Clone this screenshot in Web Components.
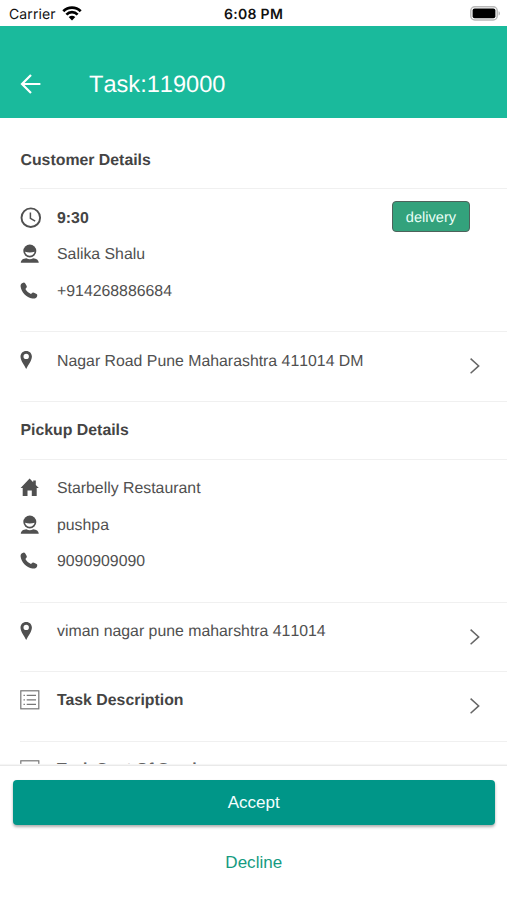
<!DOCTYPE html>
<html lang="en">
<head>
<meta charset="utf-8">
<title>Task</title>
<style>
html,body{margin:0;height:100%;background:#fff;overflow:hidden}
</style>
</head>
<body>
<task-screen></task-screen>
<script>
const ICONS = {
  wifi: '<svg width="20" height="15" viewBox="0 0 20 15" fill="none" stroke="#000" stroke-width="2.7"><path d="M1.3 5.2C6.2.3 13.8.3 18.7 5.2"/><path d="M4.4 8.6C7.5 5.4 12.5 5.4 15.6 8.6"/><path d="M6.7 11.1Q10 8.2 13.3 11.1L10 14.5Z" fill="#000" stroke="none"/></svg>',
  battery: '<svg width="31" height="15" viewBox="0 0 31 15"><rect x=".8" y=".8" width="26.4" height="13.2" rx="4" fill="#fff" stroke="#b9b9b9" stroke-width="1.5"/><rect x="2.6" y="2.6" width="22.8" height="9.6" rx="2" fill="#000"/><path d="M28.6 5.3C30.2 5.8 30.2 9 28.6 9.5Z" fill="#aaa"/></svg>',
  back: '<svg width="22" height="22" viewBox="0 0 22 22" fill="none" stroke="#fff" stroke-width="2.2"><path d="M20.4 11H2.6M11 1.9L2 11L11 20.1"/></svg>',
  clock: '<svg width="22" height="22" viewBox="0 0 22 22" fill="none" stroke="currentColor"><circle cx="10.8" cy="10.7" r="9.3" stroke-width="1.9"/><path d="M10.4 5.4V11.3L15.2 14.1" stroke-width="1.5"/></svg>',
  person: '<svg width="20" height="20" viewBox="0 0 20 20" fill="currentColor"><circle cx="9.8" cy="7" r="6.5"/><path d="M5 7.8Q9.8 9 14.6 7.8C14.2 10.2 12.3 11.7 9.8 11.7S5.4 10.2 5 7.8Z" fill="#fff"/><path d="M.8 18.8C.9 15.7 3.1 14.6 6.4 14.2Q9.8 16.2 13.2 14.2C16.5 14.6 18.6 15.7 18.8 18.8Z"/></svg>',
  phone: '<svg width="20" height="20" viewBox="0 0 20 20" fill="currentColor"><path d="M3.2 1.7Q4.4 1.3 5.1 2.3L6.7 4.9Q7.1 5.9 6.4 6.8L5.4 8C6.4 10.2 8.7 12 11 13L12.3 11.8Q13 11.3 14 11.7L16.6 13Q17.6 13.8 17.2 14.9C16.6 16.9 14.8 17.9 12.4 17.5C6.3 16.4 1.2 11 .6 5.4C.4 3.4 1.4 2 3.2 1.7Z"/></svg>',
  pin: '<svg width="14" height="20" viewBox="0 0 14 20" fill="currentColor"><path fill-rule="evenodd" d="M6.2 .9C2.8 .9 .5 3.3 .5 6.5C.5 10.7 4.2 14.7 6.2 19C8.2 14.7 11.9 10.7 11.9 6.5C11.9 3.3 9.6 .9 6.2 .9ZM6.2 3.7A2.7 2.7 0 1 1 6.2 9.1A2.7 2.7 0 1 1 6.2 3.7Z"/></svg>',
  home: '<svg width="20" height="20" viewBox="0 0 20 20" fill="currentColor"><path d="M9.6 .6L13.2 4.3V2.6H15.8V7L18.8 10.1H16.7V17.9H11.8V12.4H7.5V17.9H2.7V10.1H.6Z"/></svg>',
  list: '<svg width="20" height="20" viewBox="0 0 20 20" fill="none" stroke="#777" stroke-width="1.2"><rect x=".8" y=".8" width="18" height="18"/><path d="M6.7 5.4H16M6.7 9.9H16M6.7 14.4H16M3.5 5.4H4.9M3.5 9.9H4.9M3.5 14.4H4.9"/></svg>',
  chevron: '<svg width="12" height="18" viewBox="0 0 12 18" fill="none" stroke="#666" stroke-width="1.5"><path d="M1.6 1.6L9.7 8.9L1.6 16.2"/></svg>'
};
function define(name, render) {
  customElements.define(name, class extends HTMLElement {
    connectedCallback() {
      if (!this.shadowRoot) this.attachShadow({mode: 'open'}).innerHTML = render(this);
    }
  });
}
define('ui-icon', el => `<style>:host{display:block;line-height:0;flex:none}svg{display:block}</style>${ICONS[el.getAttribute('name')]}`);

define('status-bar', () => `<style>
:host{display:grid;grid-template-columns:1fr auto 1fr;align-items:center;height:25.5px;padding:2px 6px 0 9px;box-sizing:border-box;background:#fff;color:#111;font:14px/23px Inter,sans-serif;flex:none}
.l{display:flex;align-items:center;gap:6px;letter-spacing:.1px}.t{font-weight:600;letter-spacing:.3px;margin-right:3px;padding-top:1px}.l span{padding-top:1px}.r{justify-self:end}
ui-icon{margin-bottom:1px}
</style><div class="l"><span>Carrier</span><ui-icon name="wifi"></ui-icon></div><div class="t">6:08 PM</div><ui-icon class="r" name="battery"></ui-icon>`);

define('app-header', () => `<style>
:host{display:flex;align-items:center;gap:47px;height:92.5px;box-sizing:border-box;padding:25px 20px 0 20px;background:#1aba9c;color:#fff;font-size:23.6px;line-height:30px;flex:none}
span{padding-top:2px}
</style><ui-icon name="back"></ui-icon><span><slot></slot></span>`);

define('section-title', () => `<style>
:host{display:flex;align-items:center;box-sizing:border-box;height:58px;margin-left:20px;padding:2px 0 0 .5px;border-bottom:1px solid #f0f0f0;color:#444;font-weight:bold;flex:none}
</style><slot></slot>`);

define('info-group', () => `<style>
:host{display:block;box-sizing:border-box;height:143px;margin-left:20px;padding-top:10.5px;border-bottom:1px solid #f0f0f0;flex:none}
</style><slot></slot>`);

define('info-row', el => `<style>
:host{display:flex;align-items:center;height:36.6px;box-sizing:border-box}
.i{width:37px;flex:none}.text{flex:1;padding-top:2px}
</style><div class="i"><ui-icon name="${el.getAttribute('icon')}"></ui-icon></div><span class="text"><slot></slot></span><slot name="badge"></slot>`);

define('type-badge', () => `<style>
:host{display:flex;align-items:center;justify-content:center;width:78px;height:31px;box-sizing:border-box;margin:-2px 37px 0 0;border:1.5px solid #4e625b;border-radius:4px;background:#33a27c;color:#e9fff7;font-size:14.6px;font-weight:normal;padding-top:2px}
</style><slot></slot>`);

define('link-row', el => `<style>
:host{display:flex;align-items:flex-start;box-sizing:border-box;height:69.5px;margin-left:20px;padding:18px 26px 0 0;border-bottom:1px solid #f0f0f0;flex:none}
.i{width:37px;flex:none}.text{flex:1;line-height:20px;margin-top:var(--text-top,1.5px)}.c{margin-top:7px}
</style><div class="i"><ui-icon name="${el.getAttribute('icon')}"></ui-icon></div><span class="text"><slot></slot></span><ui-icon class="c" name="chevron"></ui-icon>`);

define('action-footer', () => `<style>
:host{display:flex;flex-direction:column;height:135px;box-sizing:border-box;padding:14px 12.5px 0 13px;border-top:1px solid #e9e9e9;box-shadow:0 -1px 1px #f5f5f5;background:#fff;flex:none;z-index:1;font-size:17.05px}
button{display:block;font:inherit;height:44.5px;border:0;padding:1px 0 0;margin:0;border-radius:4px;background:#009688;color:#f2ffff;box-shadow:0 2px 3px rgba(0,0,0,.32)}
.d{background:none;box-shadow:none;color:#159b80;margin-top:16px}
</style><button>Accept</button><button class="d">Decline</button>`);

define('task-screen', () => `<style>
:host{display:flex;flex-direction:column;width:507px;height:900px;overflow:hidden;background:#fff;color:#505050;font:15.85px/20px "Liberation Sans",Arial,sans-serif;text-rendering:geometricPrecision;font-kerning:none}
main{flex:1;min-height:0;overflow:hidden;display:flex;flex-direction:column;padding-top:13px;box-sizing:border-box}
b{color:#444}
.desc{--text-top:.5px;font-kerning:normal}
.last{--text-top:.5px;font-kerning:normal}
</style>
<status-bar></status-bar>
<app-header>Task:119000</app-header>
<main>
<section-title>Customer Details</section-title>
<info-group>
<info-row icon="clock"><b>9:30</b><type-badge slot="badge">delivery</type-badge></info-row>
<info-row icon="person">Salika Shalu</info-row>
<info-row icon="phone">+914268886684</info-row>
</info-group>
<link-row icon="pin">Nagar Road Pune Maharashtra 411014 DM</link-row>
<section-title>Pickup Details</section-title>
<info-group>
<info-row icon="home">Starbelly Restaurant</info-row>
<info-row icon="person">pushpa</info-row>
<info-row icon="phone">9090909090</info-row>
</info-group>
<link-row icon="pin">viman nagar pune maharshtra 411014</link-row>
<link-row icon="list" class="desc"><b>Task Description</b></link-row>
<link-row icon="list" class="last"><b>Task Cost Of Service</b></link-row>
</main>
<action-footer></action-footer>`);
</script>
</body>
</html>
